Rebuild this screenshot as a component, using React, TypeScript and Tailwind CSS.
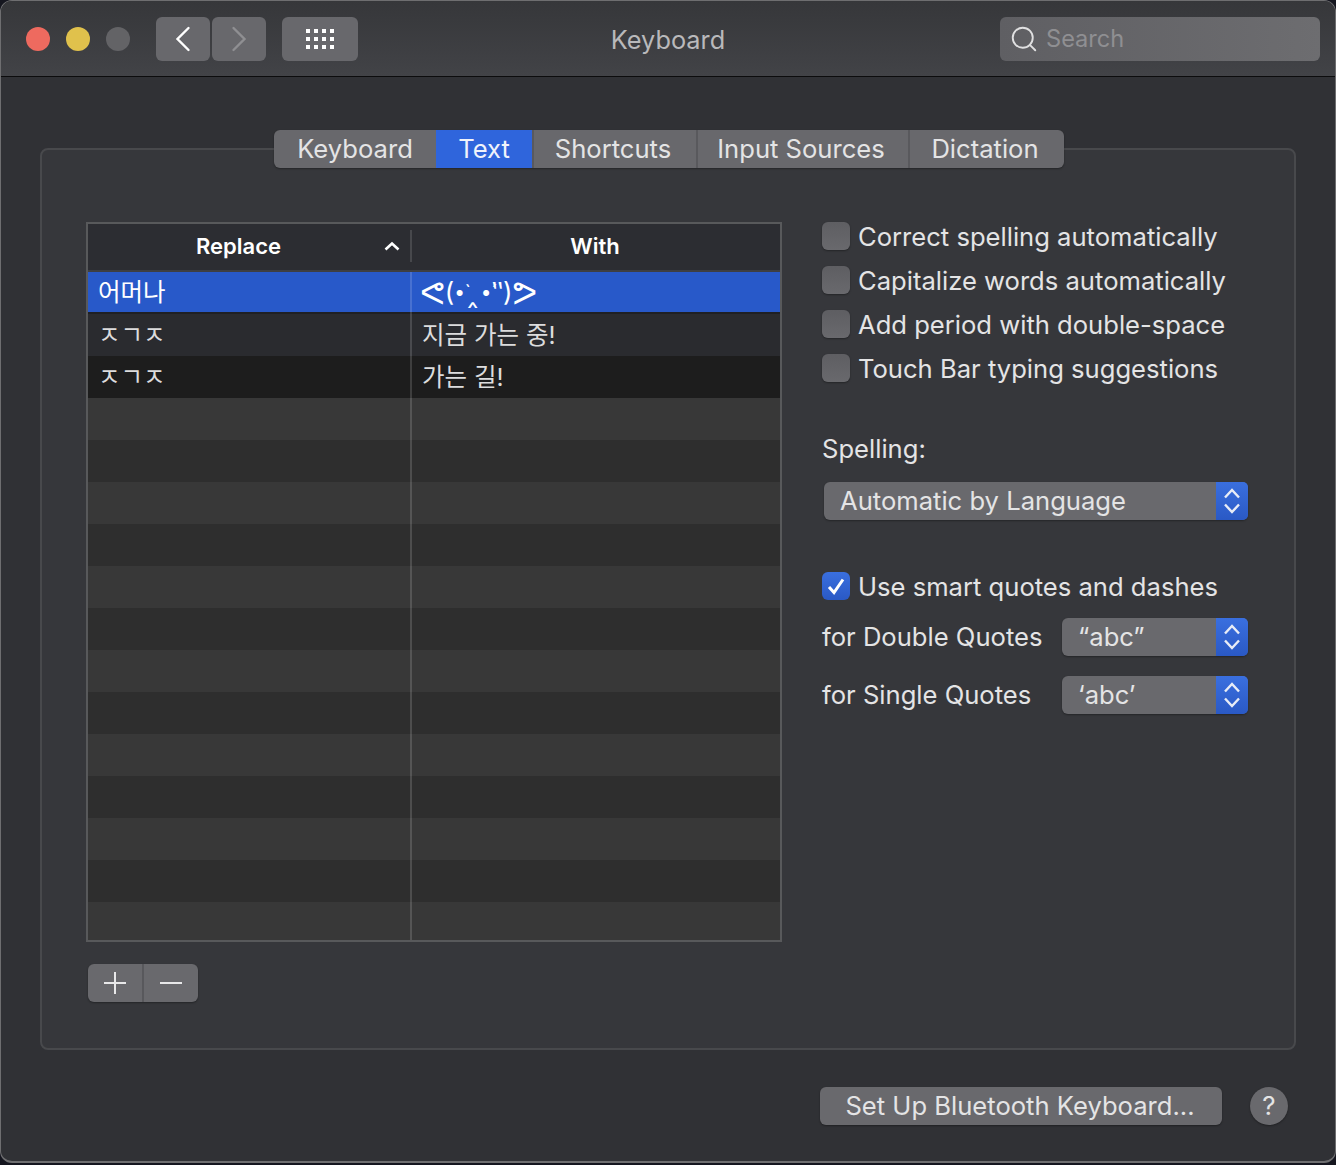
import { Search } from "lucide-react";

const checks = [
  "Correct spelling automatically",
  "Capitalize words automatically",
  "Add period with double-space",
  "Touch Bar typing suggestions",
];

const tabs = ["Keyboard", "Text", "Shortcuts", "Input Sources", "Dictation"];

const tabWidths = ["w-[162px]", "w-[96px]", "w-[164px]", "w-[212px]", "w-[156px]"];

const rows = [
  { from: "어머나", to: "", bg: "bg-[#2859c9] text-white border-b-2 border-[#1f2024]" },
  { from: "ㅈㄱㅈ", to: "지금 가는 중!", bg: "bg-[#2a2b2f] text-[#dcdcdd]" },
  { from: "ㅈㄱㅈ", to: "가는 길!", bg: "bg-[#1d1d1d] text-[#dcdcdd]" },
];

const Stepper = () => (
  <div className="w-8 h-full shrink-0 rounded-r-[5px] bg-gradient-to-b from-[#3a6fdf] to-[#2a59c5] flex items-center justify-center">
    <svg width="18" height="30" viewBox="0 0 18 30" fill="none" stroke="#e8ecf6" strokeWidth="2.4">
      <path d="M2 11.5 L9 4 L16 11.5" />
      <path d="M2 18.5 L9 26 L16 18.5" />
    </svg>
  </div>
);

function Select({ label, className, pad }: { label: string; className: string; pad: string }) {
  return (
    <div className={`h-[38px] flex items-center rounded-[6px] bg-[#69696d] shadow-[0_1px_2px_rgba(0,0,0,0.35)] ${className}`}>
      <span className={`flex-1 ${pad} text-[25.6px] leading-none text-[#e4e4e5]`}>{label}</span>
      <Stepper />
    </div>
  );
}

export default function App() {
  return (
    <div
      className="w-[1336px] h-[1165px] bg-[#15161f] overflow-hidden"
      style={{ fontFamily: '"Inter", "Noto Sans CJK KR", "DejaVu Sans", sans-serif' }}
    >
      <div className="h-[1163px] rounded-[12px] overflow-hidden border border-[#6e6e70] border-b-2 bg-[#303135] flex flex-col">
        {/* title bar */}
        <header className="h-[76px] shrink-0 flex items-center pl-[25px] pr-[15px] border-b border-[#0c0c0d] bg-gradient-to-b from-[#36373a] to-[#424347]">
          <div className="flex gap-4">
            <div className="w-6 h-6 rounded-full bg-[#ee6a5f]" />
            <div className="w-6 h-6 rounded-full bg-[#e0c14c]" />
            <div className="w-6 h-6 rounded-full bg-[#636366]" />
          </div>
          <div className="flex gap-0.5 ml-[26px]">
            <div className="w-[54px] h-11 rounded-[6px] bg-[#68686c] flex items-center justify-center">
              <svg width="16" height="26" viewBox="0 0 16 26" fill="none" stroke="white" strokeWidth="2.4" strokeLinecap="round">
                <path d="M13.5 2 L2.5 13 L13.5 24" />
              </svg>
            </div>
            <div className="w-[54px] h-11 rounded-[6px] bg-[#68686c] flex items-center justify-center">
              <svg width="16" height="26" viewBox="0 0 16 26" fill="none" stroke="#8f8f92" strokeWidth="2.4" strokeLinecap="round">
                <path d="M2.5 2 L13.5 13 L2.5 24" />
              </svg>
            </div>
          </div>
          <div className="w-[76px] h-11 ml-4 rounded-[6px] bg-[#68686c] grid [grid-template-columns:repeat(4,4px)] gap-1 content-center justify-center">
            {Array.from({ length: 12 }).map((_, i) => (
              <div key={i} className="w-1 h-1 bg-white" />
            ))}
          </div>
          <div className="flex-1 text-center pr-[22px] pt-0.5 text-[25.3px] text-[#b9b9bb]">Keyboard</div>
          <div className="w-[320px] h-11 rounded-[6px] bg-gradient-to-r from-[#5f5f63] to-[#6d6d70] flex items-center pl-[9px] gap-[7px]">
            <Search size={30} strokeWidth={1.5} className="text-[#e0e0e1]" />
            <span className="text-[23.6px] text-[#8f8f92]">Search</span>
          </div>
        </header>

        {/* content */}
        <main className="flex-1 px-[39px] pt-[71px]">
          <div className="h-[902px] rounded-[8px] border-2 border-[#48494c] bg-[#36373b] flex flex-col">
            <div className="flex h-[38px] -mt-[20px] ml-[232px] w-fit rounded-[6px] overflow-hidden bg-[#68686c] shadow-[0_1px_2px_rgba(0,0,0,0.35)]">
              {tabs.map((t, i) => (
                <div
                  key={t}
                  className={`${tabWidths[i]} flex items-center justify-center text-[25.6px] leading-none ${
                    t === "Text" ? "bg-[#2f65dc] text-[#f0f3fb]" : "text-[#e4e4e5]"
                  } ${i > 1 ? "border-l-2 border-[#59595d] pr-[4px]" : ""}`}
                >
                  {t}
                </div>
              ))}
            </div>

            <div className="flex pl-[44px] pt-[54px]">
              <div className="w-[696px]">
                {/* replacement table */}
                <div className="relative h-[720px] border-2 border-[#58595b] overflow-hidden">
                  <div className="flex h-[48px] pb-[2px] bg-[#2c2d32] border-b-2 border-[#3e3f43] text-[22px] font-semibold text-white">
                    <div className="w-[322px] pl-[108px] flex items-center gap-[103px]">
                      <span>Replace</span>
                      <svg width="16" height="10" viewBox="0 0 16 10" fill="none" stroke="white" strokeWidth="2.6">
                        <path d="M1.5 8.5 L8 2.5 L14.5 8.5" />
                      </svg>
                    </div>
                    <div className="flex-1 flex items-center justify-center pr-[2px] border-l-2 border-[#47484c] my-[6px]">With</div>
                  </div>
                  {rows.map((r, i) => (
                    <div key={i} className={`h-[42px] flex items-center text-[24.5px] leading-none ${r.bg}`}>
                      <div className="w-[322px] pl-[10px]">{r.from}</div>
                      {r.to ? (
                        <div className="pl-[12px]">{r.to}</div>
                      ) : (
                        <div className="pl-[10px] flex items-center h-full text-[26px] whitespace-nowrap">
                          <span className="text-[34px]">ᕙ</span>
                          <span>(</span>
                          <span className="text-[19px]">•̀</span>
                          <span className="px-[2px]">‸</span>
                          <span className="text-[19px]">•́</span>
                          <span>‶)</span>
                          <span className="text-[34px]">ᕗ</span>
                        </div>
                      )}
                    </div>
                  ))}
                  {Array.from({ length: 13 }).map((_, i) => (
                    <div key={i} className={`h-[42px] ${i % 2 === 0 ? "bg-[#383838]" : "bg-[#2e2e2e]"}`} />
                  ))}
                  <div className="absolute left-[322px] top-[48px] bottom-0 w-0.5 bg-white/15" />
                </div>
                {/* add and remove */}
                <div className="flex w-[110px] h-[38px] ml-[2px] mt-[22px] rounded-[6px] overflow-hidden bg-[#69696d] shadow-[0_1px_2px_rgba(0,0,0,0.35)]">
                  <div className="w-[56px] flex items-center justify-center border-r-2 border-[#58585c] pr-[1px]">
                    <svg width="22" height="22" viewBox="0 0 22 22" stroke="#e8e8e9" strokeWidth="2">
                      <path d="M11 0 V22 M0 11 H22" />
                    </svg>
                  </div>
                  <div className="flex-1 flex items-center justify-center">
                    <svg width="22" height="22" viewBox="0 0 22 22" stroke="#e8e8e9" strokeWidth="2">
                      <path d="M0 11 H22" />
                    </svg>
                  </div>
                </div>
              </div>

              {/* options */}
              <div className="w-[426px] ml-[40px] text-[25.6px] leading-none text-[#e4e4e5]">
                <div className="flex flex-col gap-4">
                  {checks.map((c) => (
                    <div key={c} className="h-7 flex items-center gap-2">
                      <div className="w-7 h-7 rounded-[6px] bg-gradient-to-b from-[#5e5e62] to-[#69696d] shadow-[0_1px_2px_rgba(0,0,0,0.35)]" />
                      <span className="pt-0.5">{c}</span>
                    </div>
                  ))}
                </div>
                <div className="mt-[53px] h-7 flex items-center">Spelling:</div>
                <Select label="Automatic by Language" className="w-[424px] ml-[2px] mt-[19px]" pad="pl-[16px]" />
                <div className="mt-[52px] h-7 flex items-center gap-2">
                  <div className="w-7 h-7 rounded-[6px] bg-gradient-to-b from-[#3a6fdf] to-[#2a59c5] flex items-center justify-center">
                    <svg width="20" height="20" viewBox="0 0 20 20" fill="none" stroke="white" strokeWidth="3">
                      <path d="M3 11 L8 16.5 L17 3.5" />
                    </svg>
                  </div>
                  <span className="pt-0.5">Use smart quotes and dashes</span>
                </div>
                <div className="mt-[18px] flex items-center justify-between">
                  <span>for Double Quotes</span>
                  <Select label="“abc”" className="w-[186px]" pad="pl-[16px]" />
                </div>
                <div className="mt-[20px] flex items-center justify-between">
                  <span>for Single Quotes</span>
                  <Select label="‘abc’" className="w-[186px]" pad="pl-[16px]" />
                </div>
              </div>
            </div>
          </div>

          <div className="flex items-center mt-[37px] pl-[780px]">
            <div className="w-[402px] h-[38px] pr-[2px] rounded-[6px] bg-[#69696d] flex items-center justify-center text-[25.6px] leading-none text-[#e4e4e5] shadow-[0_1px_2px_rgba(0,0,0,0.35)]">
              Set Up Bluetooth Keyboard...
            </div>
            <div className="w-[38px] h-[38px] ml-[28px] rounded-full bg-[#69696d] flex items-center justify-center text-[26px] leading-none text-[#e4e4e5] shadow-[0_1px_2px_rgba(0,0,0,0.35)]">
              ?
            </div>
          </div>
        </main>
      </div>
    </div>
  );
}
